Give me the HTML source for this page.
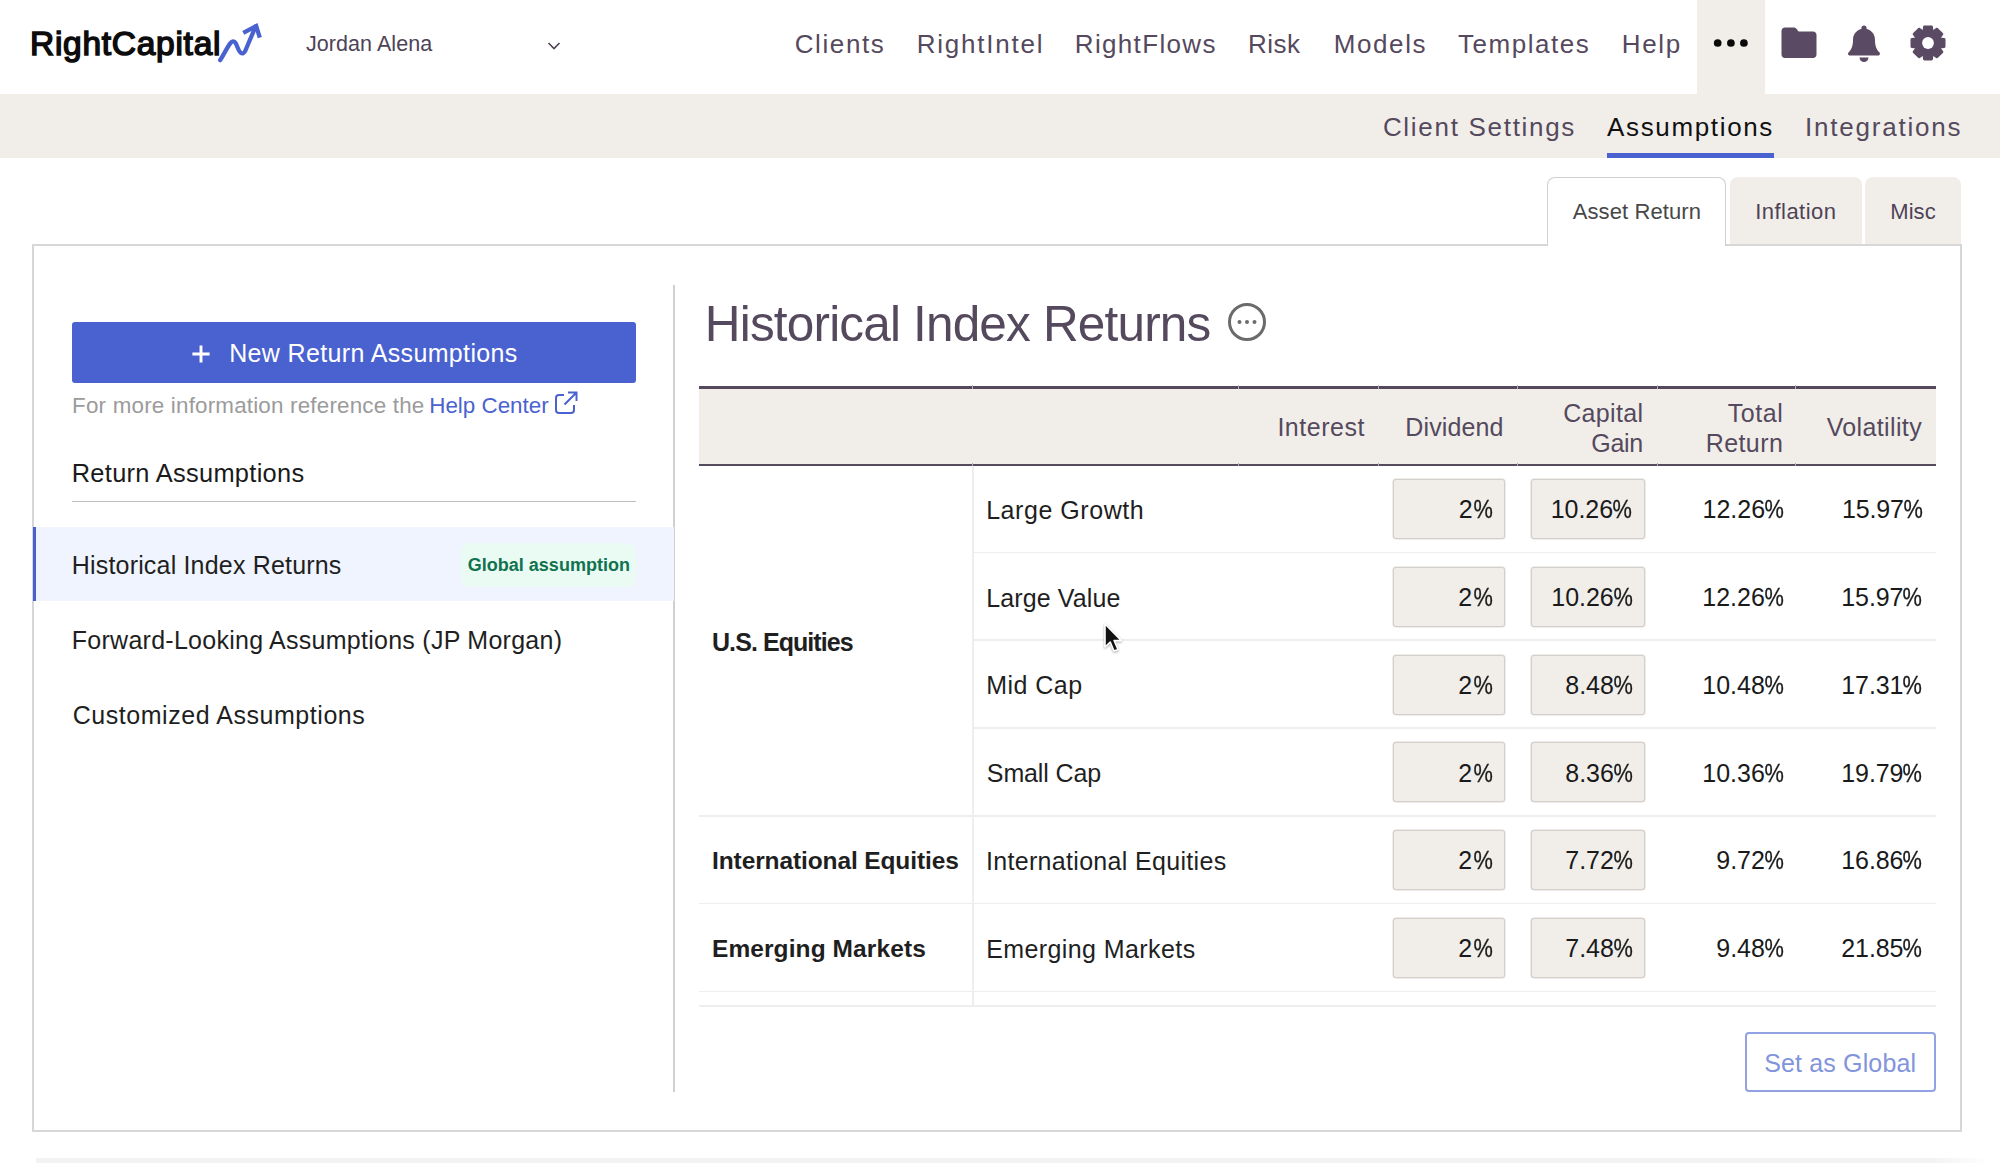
<!DOCTYPE html>
<html lang="en">
<head>
<meta charset="utf-8">
<title>RightCapital - Assumptions</title>
<style>
*{box-sizing:border-box;margin:0;padding:0}
html,body{width:2000px;height:1163px;overflow:hidden;background:#fff}
body{font-family:"Liberation Sans",sans-serif;color:#1f1f1f;position:relative}
.abs{position:absolute;white-space:nowrap}
.t{position:absolute;white-space:nowrap;line-height:1}
#topnav{position:absolute;left:0;top:0;width:2000px;height:94px;background:#fff}
#more{left:1697px;top:0;width:68px;height:94px;background:#f1eeea}
#more i{position:absolute;top:39.5px;width:7.6px;height:7.6px;border-radius:50%;background:#111}
#subnav{position:absolute;left:0;top:94px;width:2000px;height:64px;background:#f1eeea}
#underline{left:1607px;top:153.4px;width:166.5px;height:4.6px;background:#4a62cf}
.tab{top:176.8px;height:67.7px;background:#f1eeea;border-radius:8px 8px 0 0}
#tab1{left:1547px;width:179.4px;background:#fff;border:1.5px solid #d0d0d0;border-bottom:none;height:69.7px;z-index:2}
#tab2{left:1730.2px;width:131.7px}
#tab3{left:1865px;width:96.4px}
#panel{position:absolute;left:32px;top:243.5px;width:1929.6px;height:888.5px;border:2px solid #d7d7d7;background:#fff}
#vdiv{left:673.3px;top:285px;width:1.4px;height:807px;background:#d0d0d0}
#newbtn{left:72px;top:322px;width:564px;height:60.6px;background:#4a62cf;border-radius:3px}
#rline{left:72px;top:500.8px;width:564px;height:1.5px;background:#bdbdbd}
#sel{left:33px;top:527px;width:640.5px;height:74px;background:#eff4fe;border-left:3.8px solid #4a62cf}
#badge{left:460.5px;top:542.5px;width:175px;height:44px;background:#eafbf3;border-radius:9px}
#thead{left:699px;top:385.5px;width:1237px;height:80.5px;background:#f1eeea;border-top:3.6px solid #55495d;border-bottom:2.4px solid #55495d}
.gap{position:absolute;width:1.2px;background:#b5aeb9}
.hl{position:absolute;height:1.8px;background:#eeeeee}
.inp{position:absolute;height:60px;background:#f1eeea;border:1px solid #d3d0cc;border-radius:3px;box-shadow:0 0 0 0.5px #dedbd7}
.pc{display:inline-block;-webkit-text-stroke:0.3px currentColor;transform:scaleX(0.87);transform-origin:50% 50%;margin-left:-1.9px;margin-right:-1.45px}
#setg{left:1745.2px;top:1032.4px;width:190.4px;height:60px;border:2px solid #93a2e3;border-radius:4px;background:#fff}
#foot{left:36px;top:1158px;width:1955px;height:5px;background:linear-gradient(90deg,#f3f3f3 97%,#fff)}
</style>
</head>
<body>
<div id="topnav"></div>
<div id="subnav"></div>
<div id="panel"></div>
<div id="logo" class="t" style="left:29.99px;top:26.70px;font-size:33.5px;color:#0c0c0c;letter-spacing:0.725px;-webkit-text-stroke:1.5px #0c0c0c;">RightCapital</div>
<svg class="abs" style="left:214px;top:14px" width="56" height="56" viewBox="214 14 56 56"><path d="M220.2 60.2 C224 54 227.5 47 230.2 43.4 C232.2 40.8 234.3 40.6 235.6 43 C237.3 46 238.6 51.5 241 53 C242.6 54 244 53 245.2 51 L255.6 26.5" fill="none" stroke="#4a62cf" stroke-width="4.3" stroke-linecap="round" stroke-linejoin="round"/><path d="M243.3 32.9 L256.2 26 L259.8 37.6" fill="none" stroke="#4a62cf" stroke-width="4.3" stroke-linecap="butt" stroke-linejoin="miter" stroke-miterlimit="10"/></svg>
<div id="user" class="t" style="left:306.00px;top:34.00px;font-size:21.5px;color:#4e4356;letter-spacing:0.061px;">Jordan Alena</div>
<svg class="abs" style="left:546px;top:40px" width="16" height="12" viewBox="0 0 16 12"><path d="M2.5 3 L8 8.5 L13.5 3" fill="none" stroke="#4e4356" stroke-width="1.6"/></svg>
<div id="n1" class="t" style="left:794.64px;top:31.30px;font-size:26px;color:#55495d;letter-spacing:1.623px;">Clients</div>
<div id="n2" class="t" style="left:916.79px;top:31.30px;font-size:26px;color:#55495d;letter-spacing:1.769px;">RightIntel</div>
<div id="n3" class="t" style="left:1074.82px;top:31.30px;font-size:26px;color:#55495d;letter-spacing:1.331px;">RightFlows</div>
<div id="n4" class="t" style="left:1248.08px;top:31.30px;font-size:26px;color:#55495d;letter-spacing:0.493px;">Risk</div>
<div id="n5" class="t" style="left:1333.76px;top:31.30px;font-size:26px;color:#55495d;letter-spacing:1.585px;">Models</div>
<div id="n6" class="t" style="left:1457.94px;top:31.30px;font-size:26px;color:#55495d;letter-spacing:1.538px;">Templates</div>
<div id="n7" class="t" style="left:1621.76px;top:31.30px;font-size:26px;color:#55495d;letter-spacing:1.673px;">Help</div>
<div id="more" class="abs"><svg width="68" height="94" viewBox="0 0 68 94"><circle cx="20.7" cy="43" r="3.85" fill="#0a0a0a"/><circle cx="33.9" cy="43" r="3.85" fill="#0a0a0a"/><circle cx="46.9" cy="43" r="3.85" fill="#0a0a0a"/></svg></div>
<svg class="abs" style="left:1781px;top:27px" width="36" height="32" viewBox="0 0 36 32"><path d="M4 0.5 H12.5 C14 0.5 14.8 1 15.6 2 L17.6 4.6 H32 C34 4.6 35.5 6 35.5 8 V27.5 C35.5 29.5 34 31 32 31 H4 C2 31 0.5 29.5 0.5 27.5 V4 C0.5 2 2 0.5 4 0.5 Z" fill="#5a4a63"/></svg>
<svg class="abs" style="left:1847px;top:25px" width="34" height="38" viewBox="0 0 34 38"><path d="M17 0.5 C18.6 0.5 19.6 1.6 19.6 3 V4 C25 5.2 28 9.8 28 15 C28 21 29.5 24.5 32.3 27.2 C33.6 28.5 32.8 30.5 31 30.5 H3 C1.2 30.5 0.4 28.5 1.7 27.2 C4.5 24.5 6 21 6 15 C6 9.8 9 5.2 14.4 4 V3 C14.4 1.6 15.4 0.5 17 0.5 Z" fill="#5a4a63"/><path d="M12.5 32.5 H21.5 C21.5 35 19.5 37 17 37 C14.5 37 12.5 35 12.5 32.5 Z" fill="#5a4a63"/></svg>
<svg class="abs" style="left:1910px;top:25px" width="36" height="36" viewBox="-18 -18 36 36"><g fill="#5a4a63"><circle r="13.3"/><g id="t"><path d="M-3.5 -17.5 H3.5 C4.3 -17.5 4.8 -17 4.9 -16.3 L5.8 -10 H-5.8 L-4.9 -16.3 C-4.8 -17 -4.3 -17.5 -3.5 -17.5 Z"/></g><use href="#t" transform="rotate(45)"/><use href="#t" transform="rotate(90)"/><use href="#t" transform="rotate(135)"/><use href="#t" transform="rotate(180)"/><use href="#t" transform="rotate(225)"/><use href="#t" transform="rotate(270)"/><use href="#t" transform="rotate(315)"/></g><circle r="5.9" fill="#fff"/></svg>
<div id="s1" class="t" style="left:1382.88px;top:114.00px;font-size:26px;color:#55495d;letter-spacing:1.703px;">Client Settings</div>
<div id="s2" class="t" style="left:1607.08px;top:114.00px;font-size:26px;color:#111;letter-spacing:1.641px;">Assumptions</div>
<div id="s3" class="t" style="left:1805.00px;top:114.00px;font-size:26px;color:#55495d;letter-spacing:1.777px;">Integrations</div>
<div id="underline" class="abs"></div>
<div id="tab1" class="abs tab"></div><div id="tab2" class="abs tab"></div><div id="tab3" class="abs tab"></div>
<div id="tb1" class="t" style="left:1572.72px;top:200.80px;font-size:22px;color:#474747;letter-spacing:0.102px;z-index:3;">Asset Return</div>
<div id="tb2" class="t" style="left:1755.31px;top:200.80px;font-size:22px;color:#4e4356;letter-spacing:0.446px;">Inflation</div>
<div id="tb3" class="t" style="left:1890.35px;top:200.80px;font-size:22px;color:#4e4356;letter-spacing:0.032px;">Misc</div>
<div id="vdiv" class="abs"></div>
<div id="newbtn" class="abs"></div>
<svg class="abs" style="left:191.7px;top:345.4px" width="18" height="18" viewBox="0 0 18 18"><path d="M9 0.4 V17.6 M0.4 9 H17.6" stroke="#fff" stroke-width="2.9" fill="none"/></svg>
<div id="btn" class="t" style="left:229.13px;top:340.60px;font-size:25px;color:#fff;letter-spacing:0.360px;">New Return Assumptions</div>
<div id="info1" class="t" style="left:72.11px;top:395.00px;font-size:22.4px;color:#9b9b9b;letter-spacing:0.187px;">For more information reference the</div>
<div id="info2" class="t" style="left:429.28px;top:395.00px;font-size:22.4px;color:#4a62cf;letter-spacing:-0.011px;">Help Center</div>
<svg class="abs" style="left:553px;top:390px" width="26" height="26" viewBox="0 0 26 26"><path d="M11 5 H6 C4 5 3 6 3 8 V20 C3 22 4 23 6 23 H18 C20 23 21 22 21 20 V15" fill="none" stroke="#4a62cf" stroke-width="2"/><path d="M15 2.5 H23.5 V11 M23 3 L11.5 14.5" fill="none" stroke="#4a62cf" stroke-width="2"/></svg>
<div id="rah" class="t" style="left:71.74px;top:461.00px;font-size:25.4px;color:#1a1a1a;letter-spacing:0.304px;">Return Assumptions</div>
<div id="rline" class="abs"></div>
<div id="sel" class="abs"></div>
<div id="badge" class="abs"></div>
<div id="it1" class="t" style="left:71.78px;top:552.80px;font-size:25px;color:#1f1f1f;letter-spacing:0.181px;">Historical Index Returns</div>
<div id="bdg" class="t" style="left:467.80px;top:555.70px;font-size:18px;color:#11724f;font-weight:700;letter-spacing:0.005px;">Global assumption</div>
<div id="it2" class="t" style="left:71.80px;top:628.20px;font-size:25px;color:#1f1f1f;letter-spacing:0.261px;">Forward-Looking Assumptions (JP Morgan)</div>
<div id="it3" class="t" style="left:72.65px;top:703.00px;font-size:25px;color:#1f1f1f;letter-spacing:0.547px;">Customized Assumptions</div>
<div id="title" class="t" style="left:704.84px;top:298.60px;font-size:49.5px;color:#55495d;letter-spacing:-0.827px;">Historical Index Returns</div>
<svg class="abs" style="left:1226px;top:301px" width="42" height="42" viewBox="0 0 42 42"><circle cx="21" cy="21" r="17.5" fill="none" stroke="#6b6b6b" stroke-width="3"/><circle cx="13.5" cy="21" r="2" fill="#6b6b6b"/><circle cx="21" cy="21" r="2" fill="#6b6b6b"/><circle cx="28.5" cy="21" r="2" fill="#6b6b6b"/></svg>
<div id="thead" class="abs"></div>
<div class="gap" style="left:972px;top:385px;height:4.4px"></div><div class="gap" style="left:972px;top:463.4px;height:3px"></div>
<div class="gap" style="left:1238px;top:385px;height:4.4px"></div><div class="gap" style="left:1238px;top:463.4px;height:3px"></div>
<div class="gap" style="left:1378px;top:385px;height:4.4px"></div><div class="gap" style="left:1378px;top:463.4px;height:3px"></div>
<div class="gap" style="left:1517px;top:385px;height:4.4px"></div><div class="gap" style="left:1517px;top:463.4px;height:3px"></div>
<div class="gap" style="left:1657px;top:385px;height:4.4px"></div><div class="gap" style="left:1657px;top:463.4px;height:3px"></div>
<div class="gap" style="left:1795px;top:385px;height:4.4px"></div><div class="gap" style="left:1795px;top:463.4px;height:3px"></div>
<div id="h1" class="t" style="left:1277.39px;top:415.30px;font-size:25px;color:#55495d;letter-spacing:0.519px;">Interest</div>
<div id="h2" class="t" style="left:1405.33px;top:415.30px;font-size:25px;color:#55495d;letter-spacing:0.124px;">Dividend</div>
<div id="h3a" class="t" style="left:1563.21px;top:401.00px;font-size:25px;color:#55495d;letter-spacing:0.353px;">Capital</div>
<div id="h3b" class="t" style="left:1591.27px;top:431.00px;font-size:25px;color:#55495d;letter-spacing:-0.277px;">Gain</div>
<div id="h4a" class="t" style="left:1727.63px;top:401.00px;font-size:25px;color:#55495d;letter-spacing:0.565px;">Total</div>
<div id="h4b" class="t" style="left:1705.72px;top:431.00px;font-size:25px;color:#55495d;letter-spacing:0.414px;">Return</div>
<div id="h5" class="t" style="left:1826.70px;top:415.30px;font-size:25px;color:#55495d;letter-spacing:0.359px;">Volatility</div>
<div id="nm0" class="t" style="left:986.16px;top:497.80px;font-size:25px;color:#1f1f1f;letter-spacing:0.552px;">Large Growth</div>
<div class="inp" style="left:1392.6px;top:479.00px;width:112.4px"></div>
<div class="inp" style="left:1531.3px;top:479.00px;width:113.3px"></div>
<div id="a0" class="t" style="left:1458.65px;top:497.20px;font-size:25px;color:#1a1a1a;letter-spacing:1.327px;">2<span class="pc">%</span></div>
<div id="b0" class="t" style="left:1550.74px;top:497.20px;font-size:25px;color:#1a1a1a;letter-spacing:-0.060px;">10.26<span class="pc">%</span></div>
<div id="c0" class="t" style="left:1702.58px;top:497.20px;font-size:25px;color:#1a1a1a;letter-spacing:-0.021px;">12.26<span class="pc">%</span></div>
<div id="d0" class="t" style="left:1841.88px;top:497.20px;font-size:25px;color:#1a1a1a;letter-spacing:-0.106px;">15.97<span class="pc">%</span></div>
<div class="hl" style="left:973px;width:963px;top:551.50px"></div>
<div id="nm1" class="t" style="left:986.16px;top:585.60px;font-size:25px;color:#1f1f1f;letter-spacing:0.127px;">Large Value</div>
<div class="inp" style="left:1392.6px;top:566.80px;width:112.4px"></div>
<div class="inp" style="left:1531.3px;top:566.80px;width:113.3px"></div>
<div id="a1" class="t" style="left:1458.32px;top:585.00px;font-size:25px;color:#1a1a1a;letter-spacing:1.327px;">2<span class="pc">%</span></div>
<div id="b1" class="t" style="left:1551.32px;top:585.00px;font-size:25px;color:#1a1a1a;letter-spacing:-0.060px;">10.26<span class="pc">%</span></div>
<div id="c1" class="t" style="left:1702.32px;top:585.00px;font-size:25px;color:#1a1a1a;letter-spacing:-0.021px;">12.26<span class="pc">%</span></div>
<div id="d1" class="t" style="left:1841.32px;top:585.00px;font-size:25px;color:#1a1a1a;letter-spacing:-0.106px;">15.97<span class="pc">%</span></div>
<div class="hl" style="left:973px;width:963px;top:639.30px"></div>
<div id="nm2" class="t" style="left:986.16px;top:673.40px;font-size:25px;color:#1f1f1f;letter-spacing:0.472px;">Mid Cap</div>
<div class="inp" style="left:1392.6px;top:654.60px;width:112.4px"></div>
<div class="inp" style="left:1531.3px;top:654.60px;width:113.3px"></div>
<div id="a2" class="t" style="left:1458.32px;top:672.80px;font-size:25px;color:#1a1a1a;letter-spacing:1.327px;">2<span class="pc">%</span></div>
<div id="b2" class="t" style="left:1565.32px;top:672.80px;font-size:25px;color:#1a1a1a;letter-spacing:-0.060px;">8.48<span class="pc">%</span></div>
<div id="c2" class="t" style="left:1702.32px;top:672.80px;font-size:25px;color:#1a1a1a;letter-spacing:-0.021px;">10.48<span class="pc">%</span></div>
<div id="d2" class="t" style="left:1841.32px;top:672.80px;font-size:25px;color:#1a1a1a;letter-spacing:-0.106px;">17.31<span class="pc">%</span></div>
<div class="hl" style="left:973px;width:963px;top:727.10px"></div>
<div id="nm3" class="t" style="left:986.84px;top:761.20px;font-size:25px;color:#1f1f1f;letter-spacing:-0.125px;">Small Cap</div>
<div class="inp" style="left:1392.6px;top:742.40px;width:112.4px"></div>
<div class="inp" style="left:1531.3px;top:742.40px;width:113.3px"></div>
<div id="a3" class="t" style="left:1458.32px;top:760.60px;font-size:25px;color:#1a1a1a;letter-spacing:1.327px;">2<span class="pc">%</span></div>
<div id="b3" class="t" style="left:1565.32px;top:760.60px;font-size:25px;color:#1a1a1a;letter-spacing:-0.060px;">8.36<span class="pc">%</span></div>
<div id="c3" class="t" style="left:1702.32px;top:760.60px;font-size:25px;color:#1a1a1a;letter-spacing:-0.021px;">10.36<span class="pc">%</span></div>
<div id="d3" class="t" style="left:1841.32px;top:760.60px;font-size:25px;color:#1a1a1a;letter-spacing:-0.106px;">19.79<span class="pc">%</span></div>
<div class="hl" style="left:699px;width:1237px;top:814.90px"></div>
<div id="nm4" class="t" style="left:985.91px;top:849.00px;font-size:25px;color:#1f1f1f;letter-spacing:0.322px;">International Equities</div>
<div class="inp" style="left:1392.6px;top:830.20px;width:112.4px"></div>
<div class="inp" style="left:1531.3px;top:830.20px;width:113.3px"></div>
<div id="a4" class="t" style="left:1458.32px;top:848.40px;font-size:25px;color:#1a1a1a;letter-spacing:1.327px;">2<span class="pc">%</span></div>
<div id="b4" class="t" style="left:1565.32px;top:848.40px;font-size:25px;color:#1a1a1a;letter-spacing:-0.060px;">7.72<span class="pc">%</span></div>
<div id="c4" class="t" style="left:1716.32px;top:848.40px;font-size:25px;color:#1a1a1a;letter-spacing:-0.021px;">9.72<span class="pc">%</span></div>
<div id="d4" class="t" style="left:1841.32px;top:848.40px;font-size:25px;color:#1a1a1a;letter-spacing:-0.106px;">16.86<span class="pc">%</span></div>
<div class="hl" style="left:699px;width:1237px;top:902.70px"></div>
<div id="nm5" class="t" style="left:986.16px;top:936.80px;font-size:25px;color:#1f1f1f;letter-spacing:0.409px;">Emerging Markets</div>
<div class="inp" style="left:1392.6px;top:918.00px;width:112.4px"></div>
<div class="inp" style="left:1531.3px;top:918.00px;width:113.3px"></div>
<div id="a5" class="t" style="left:1458.32px;top:936.20px;font-size:25px;color:#1a1a1a;letter-spacing:1.327px;">2<span class="pc">%</span></div>
<div id="b5" class="t" style="left:1565.32px;top:936.20px;font-size:25px;color:#1a1a1a;letter-spacing:-0.060px;">7.48<span class="pc">%</span></div>
<div id="c5" class="t" style="left:1716.32px;top:936.20px;font-size:25px;color:#1a1a1a;letter-spacing:-0.021px;">9.48<span class="pc">%</span></div>
<div id="d5" class="t" style="left:1841.32px;top:936.20px;font-size:25px;color:#1a1a1a;letter-spacing:-0.106px;">21.85<span class="pc">%</span></div>
<div class="hl" style="left:699px;width:1237px;top:990.50px"></div>
<div class="hl" style="left:699px;width:1237px;top:1004.8px"></div>
<div class="abs" style="left:972px;top:466px;width:1.6px;height:540px;background:#eeeeee"></div>
<div id="k0" class="t" style="left:712.00px;top:629.50px;font-size:25px;color:#1f1f1f;font-weight:700;letter-spacing:-0.931px;">U.S. Equities</div>
<div id="k1" class="t" style="left:712.05px;top:848.50px;font-size:24.5px;color:#1f1f1f;font-weight:700;letter-spacing:-0.113px;">International Equities</div>
<div id="k2" class="t" style="left:711.94px;top:937.30px;font-size:24.5px;color:#1f1f1f;font-weight:700;letter-spacing:0.097px;">Emerging Markets</div>
<div id="setg" class="abs"></div>
<div id="sg" class="t" style="left:1764.25px;top:1050.50px;font-size:25px;color:#8294dc;letter-spacing:0.143px;">Set as Global</div>
<div id="foot" class="abs"></div>
<svg class="abs" style="left:1103px;top:621.6px;filter:drop-shadow(0 1px 1px rgba(0,0,0,.35))" width="22" height="32" viewBox="0 0 22 32"><path d="M2 2 V25 L7.2 20 L11 29 L15 27.4 L11.2 18.6 H18.4 Z" fill="#111" stroke="#fff" stroke-width="1.6" stroke-linejoin="round"/></svg>
</body>
</html>
